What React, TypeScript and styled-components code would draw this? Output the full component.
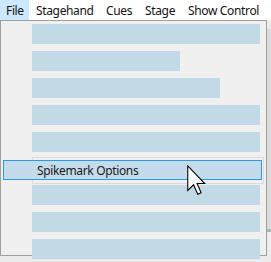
import styled, { createGlobalStyle } from 'styled-components';

const GlobalStyle = createGlobalStyle`
  html, body {
    margin: 0;
    padding: 0;
    background: #ececec;
  }
`;

const Screen = styled.div`
  position: relative;
  width: 271px;
  height: 262px;
  overflow: hidden;
  background: #ececec;
  font-family: 'Noto Sans', 'Open Sans', sans-serif;
  font-size: 12px;
  letter-spacing: -0.35px;
  color: #111;
`;

const MenuBar = styled.div`
  display: flex;
  height: 20px;
  background: #ffffff;
`;

const MenuItem = styled.div<{ $active?: boolean; $width: number }>`
  display: flex;
  align-items: center;
  flex-shrink: 0;
  box-sizing: border-box;
  width: ${({ $width }) => $width}px;
  padding-left: ${({ $active }) => ($active ? 6 : 7)}px;
  height: 20px;
  white-space: nowrap;
  background: ${({ $active }) => ($active ? '#cce8ff' : 'transparent')};
`;

const DropRow = styled.div`
  display: flex;
`;

const Dropdown = styled.div`
  width: 265px;
  height: 234px;
  background: #f0f0f0;
  border: 1px solid #a0a0a0;
`;

const Shadow = styled.div`
  width: 4px;
  margin-top: 9px;
  height: 200px;
  background: #dadada;
  border-bottom: 3px solid #a9b5c6;
`;

const ItemList = styled.div`
  display: flex;
  flex-direction: column;
  gap: 7px;
  padding: 3px 0 0 31px;
  width: 228px;
`;

const Bar = styled.div<{ $width?: number }>`
  height: 20px;
  width: ${({ $width }) => ($width ? `${$width}px` : '100%')};
  background: #c2dae6;
  flex-shrink: 0;
`;

const Slot = styled.div`
  position: relative;
  flex-shrink: 0;
  margin: -2px 0 -6px;
  width: 230px;
  height: 25px;
  border: 1px solid #dcdcdc;
`;

const DragGhost = styled.div`
  position: absolute;
  left: -30px;
  top: 2px;
  width: 259px;
  height: 20px;
  display: flex;
  align-items: center;
  padding-left: 33px;
  box-sizing: border-box;
  border: 1px solid #2b9be0;
  background: #c3dbea;
  color: #1a1a1a;
  white-space: nowrap;
`;

const Pointer = styled.svg`
  position: absolute;
  left: 187px;
  top: 165px;
`;

const menus = [
  { label: 'File', width: 29 },
  { label: 'Stagehand', width: 70 },
  { label: 'Cues', width: 39 },
  { label: 'Stage', width: 43 },
  { label: 'Show Control', width: 90 },
];

const bars: (number | undefined)[] = [undefined, 148, 188, undefined, undefined];
const barsAfter = [0, 1, 2];

export default function App() {
  return (
    <>
      <GlobalStyle />
      <Screen>
        <MenuBar>
          {menus.map((m, i) => (
            <MenuItem key={m.label} $width={m.width} $active={i === 0}>
              {m.label}
            </MenuItem>
          ))}
        </MenuBar>
        <DropRow>
          <Dropdown>
            <ItemList>
              {bars.map((w, i) => (
                <Bar key={i} $width={w} />
              ))}
              <Slot>
                <DragGhost>Spikemark Options</DragGhost>
              </Slot>
              {barsAfter.map((i) => (
                <Bar key={`a${i}`} />
              ))}
            </ItemList>
          </Dropdown>
          <Shadow />
        </DropRow>
        <Pointer width="19" height="31" viewBox="0 0 12.4 20">
          <path
            d="M0.5 0.5 L0.5 16.5 L4.3 12.8 L7 19 L9.2 18 L6.6 12 L11.6 12 Z"
            fill="#fff"
            stroke="#000"
            strokeWidth="0.7"
            strokeLinejoin="miter"
          />
        </Pointer>
      </Screen>
    </>
  );
}
